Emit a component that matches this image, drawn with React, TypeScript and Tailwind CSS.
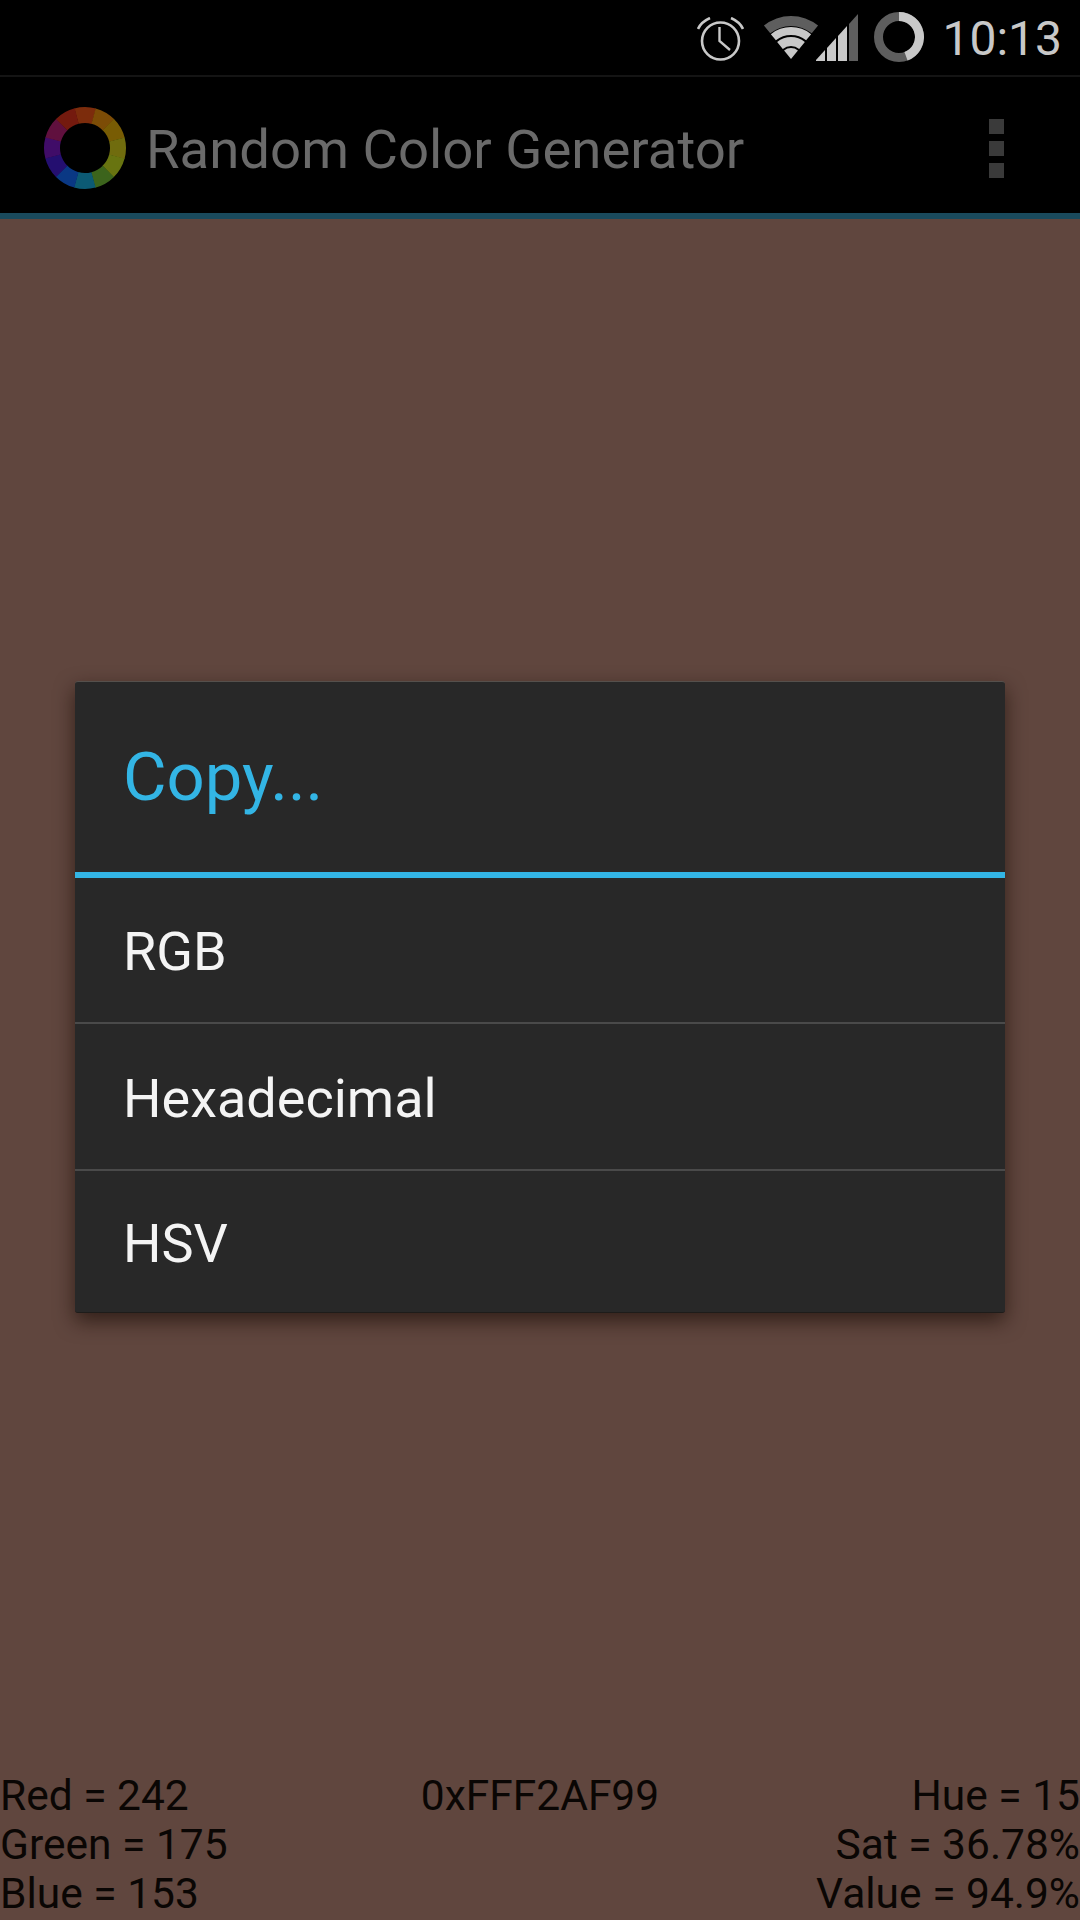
const WHEEL_COLORS = [
    "#7c2c0c", "#7c4c06", "#785c04", "#706c0e", "#687410", "#3c641c",
    "#0c5a74", "#0a3884", "#240f70", "#400c68", "#60103e", "#741a0e",
];

const MENU_ITEMS = ["RGB", "Hexadecimal", "HSV"];
const MENU_ROW_HEIGHTS = ["h-[144px]", "h-[147px]", "h-[143px]"];

function polar(cx: number, cy: number, r: number, deg: number) {
    const a = ((deg - 90) * Math.PI) / 180;
    return `${(cx + r * Math.cos(a)).toFixed(2)} ${(cy + r * Math.sin(a)).toFixed(2)}`;
}

// ring segment between two radii, r2 = 0 gives a pie slice
function sector(cx: number, cy: number, r1: number, r2: number, a1: number, a2: number) {
    const outer = `M${polar(cx, cy, r1, a1)} A${r1} ${r1} 0 0 1 ${polar(cx, cy, r1, a2)}`;
    if (r2 === 0) return `${outer} L${cx} ${cy} Z`;
    return `${outer} L${polar(cx, cy, r2, a2)} A${r2} ${r2} 0 0 0 ${polar(cx, cy, r2, a1)} Z`;
}

function ColorWheel() {
    return (
        <svg width="84" height="84" viewBox="0 0 84 84" className="shrink-0">
            {WHEEL_COLORS.map((color, i) => {
                const start = i * 30 - 15;
                return <path key={color} fill={color} d={sector(42, 42, 41, 25, start, start + 30.6)} />;
            })}
        </svg>
    );
}

function AlarmIcon() {
    return (
        <svg width="47" height="44" viewBox="0 0 47 44" fill="none" stroke="#c8c8c8" className="shrink-0">
            <circle cx="23.500" cy="24" r="18.500" strokeWidth="2.6" />
            <path d="M22.500 10 V24 L33 33" strokeWidth="2.4" />
            <path d="M1 12 Q4 5 13 1" strokeWidth="2.6" />
            <path d="M46 12 Q43 5 34 1" strokeWidth="2.6" />
        </svg>
    );
}

function WifiSignalIcon() {
    const a1 = -39;
    const a2 = 39;
    return (
        <svg width="96" height="47" viewBox="0 0 96 47" className="shrink-0">
            <path d={sector(29, 45, 43, 33, a1, a2)} fill="#5e5e5e" />
            <path d={sector(29, 45, 32, 24, a1, a2)} fill="#c8c8c8" />
            <path d={sector(29, 45, 22, 13, a1, a2)} fill="#c8c8c8" />
            <path d={sector(29, 45, 11, 0, a1, a2)} fill="#c8c8c8" />
            <path d="M54 46 L63 36 V47 H54 Z" fill="#c8c8c8" />
            <path d="M65 34 L74 24 V47 H65 Z" fill="#c8c8c8" />
            <path d="M76 22 L85 12 V47 H76 Z" fill="#c8c8c8" />
            <path d="M87 10 L96 0 V47 H87 Z" fill="#5e5e5e" />
        </svg>
    );
}

function BatteryRing() {
    return (
        <svg width="50" height="50" viewBox="0 0 50 50" fill="none" strokeWidth="9" className="shrink-0">
            <circle cx="25" cy="25" r="20.500" stroke="#5e5e5e" />
            <path d={`M25 4.500 A20.500 20.500 0 0 1 ${polar(25, 25, 20.5, 160)}`} stroke="#c8c8c8" />
        </svg>
    );
}

export default function App() {
    return (
        <div className="flex h-[1920px] w-[1080px] flex-col overflow-hidden bg-[#60463e] font-['Roboto',sans-serif]">
            {/* status bar */}
            <div className="flex h-[77px] shrink-0 items-center justify-end border-b-2 border-[#141414] bg-black pr-[18px]">
                <div className="mr-[18px] mt-[2px]"><AlarmIcon /></div>
                <div className="mr-[16px] mt-[-1px]"><WifiSignalIcon /></div>
                <div className="mr-[18px] mt-[-2px]"><BatteryRing /></div>
                <span className="mt-[3px] text-[48px] leading-none text-[#c8c8c8]">10:13</span>
            </div>

            {/* action bar */}
            <div className="flex h-[142px] shrink-0 items-center border-b-[6px] border-[#1a4a5c] bg-black pl-[43px] pr-[76px] pt-[6px]">
                <ColorWheel />
                <span className="ml-[19px] mt-[2px] text-[54.500px] leading-none text-[#6a6a6a]">Random Color Generator</span>
                <div className="ml-auto flex flex-col gap-[7px]">
                    <div className="h-[15px] w-[15px] bg-[#3a3a3a]" />
                    <div className="h-[15px] w-[15px] bg-[#3a3a3a]" />
                    <div className="h-[15px] w-[15px] bg-[#3a3a3a]" />
                </div>
            </div>

            {/* main */}
            <div className="flex flex-1 flex-col justify-between">
                <div className="mx-[75px] mt-[462px] rounded-[3px] border-t border-b border-t-[#55504c] border-b-[#1e1c1a] bg-[#282828] shadow-[0_8px_20px_rgba(25,10,5,0.65)]">
                    <div className="flex h-[190px] items-center px-[48px] text-[67px] leading-none text-[#33b5e5]">
                        Copy...
                    </div>
                    <div className="h-[6px] bg-[#33b5e5]" />
                    {MENU_ITEMS.map((item, i) => (
                        <div
                            key={item}
                            className={`flex ${MENU_ROW_HEIGHTS[i]} items-center px-[48px] pt-[4px] text-[54px] leading-none text-[#f4f4f4] ${i > 0 ? "border-t-2 border-[#4a4a4a]" : ""}`}
                        >
                            {item}
                        </div>
                    ))}
                </div>

                <div className="mb-[2px] grid grid-cols-3 text-[42.500px] leading-[49px] text-[#0a0604]">
                    <div>
                        <div>Red = 242</div>
                        <div>Green = 175</div>
                        <div>Blue = 153</div>
                    </div>
                    <div className="text-center">0xFFF2AF99</div>
                    <div className="text-right">
                        <div>Hue = 15</div>
                        <div>Sat = 36.78%</div>
                        <div>Value = 94.9%</div>
                    </div>
                </div>
            </div>
        </div>
    );
}
